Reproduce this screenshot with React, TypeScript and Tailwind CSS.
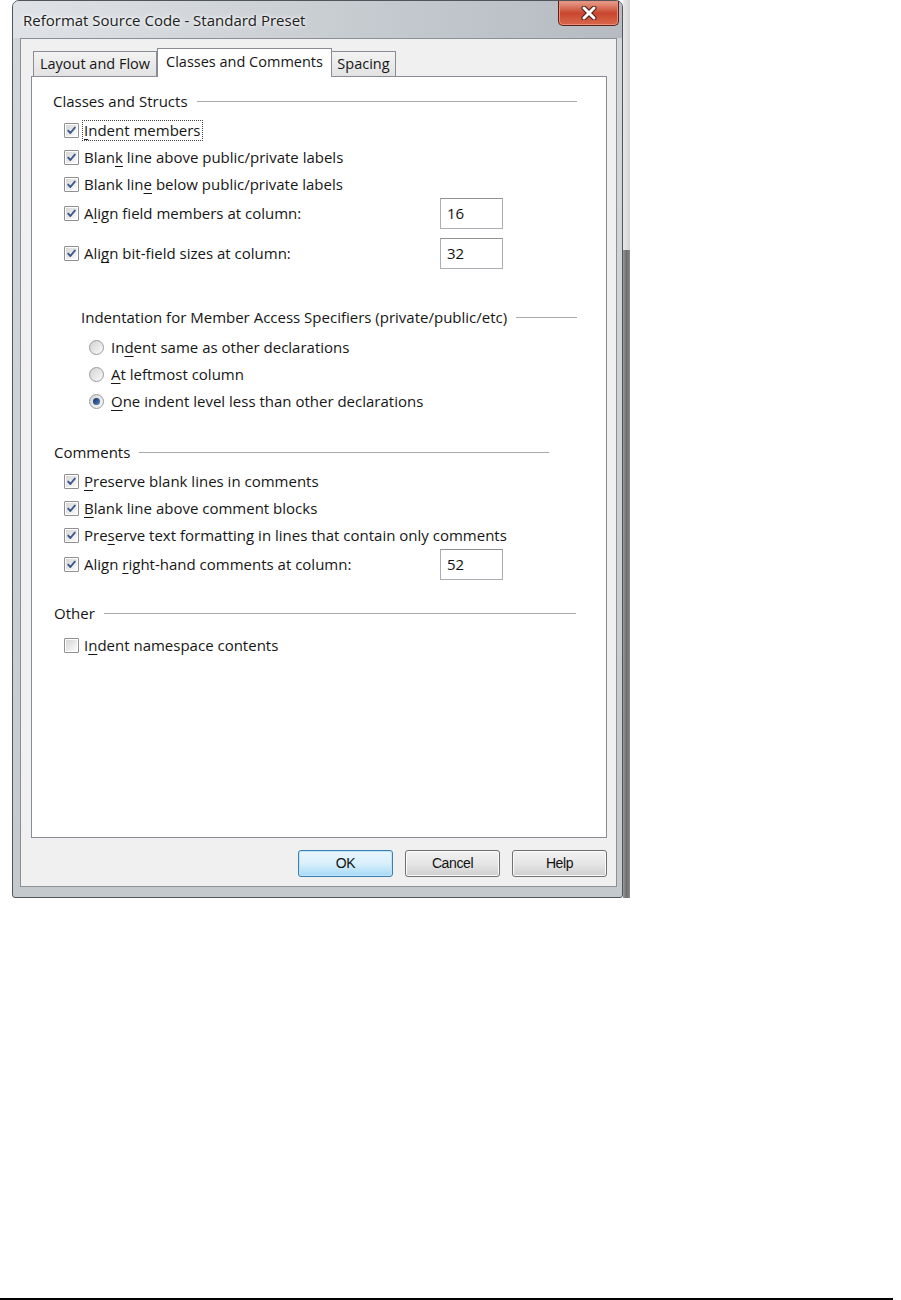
import type { ReactNode } from 'react';

function CheckBox({ checked }: { checked: boolean }) {
  return (
    <span className="w-[15px] h-[15px] shrink-0 border border-[#8f8f8f] bg-white p-px rounded-[1px]">
      <span className="block w-full h-full bg-gradient-to-br from-[#d6d6d6] to-[#fbfbfb] relative">
        {checked && (
          <svg viewBox="0 0 11 11" className="absolute inset-0 w-full h-full">
            <path d="M2.2 5.6 L4.4 8 L8.8 2.6" fill="none" stroke="#3d5a8e" strokeWidth="1.9" strokeLinecap="round" strokeLinejoin="round" />
          </svg>
        )}
      </span>
    </span>
  );
}

function Radio({ selected }: { selected: boolean }) {
  return (
    <span className="w-[15px] h-[15px] shrink-0 rounded-full border border-[#9a9a9a] bg-gradient-to-br from-[#d2d2d2] to-[#fbfbfb] flex items-center justify-center">
      {selected && <span className="w-[7px] h-[7px] rounded-full bg-gradient-to-br from-[#0e2a5a] to-[#5b8ac4]" />}
    </span>
  );
}

function Label({ pre, k, post }: { pre: string; k: string; post: string }) {
  return (
    <span className="whitespace-pre">
      {pre}
      <u className="underline-offset-[3px]">{k}</u>
      {post}
    </span>
  );
}

function Row({ checked, children, focused }: { checked: boolean; children: ReactNode; focused?: boolean }) {
  return (
    <div className="h-[27px] flex items-center pl-[32px]">
      <CheckBox checked={checked} />
      {focused ? (
        <span className="ml-[3px] px-px border border-dotted border-[#444] leading-[19px]">{children}</span>
      ) : (
        <span className="ml-[5px]">{children}</span>
      )}
    </div>
  );
}

function InputRow({ children, value, className = '' }: { children: ReactNode; value: string; className?: string }) {
  return (
    <div className={`h-[31px] flex items-center pl-[32px] ${className}`}>
      <CheckBox checked />
      <span className="ml-[5px] w-[356px]">{children}</span>
      <div className="w-[63px] h-[31px] border border-[#abadb3] border-t-[#8e9096] bg-white flex items-center pl-[6px] text-[#111]">
        {value}
      </div>
    </div>
  );
}

function RadioRow({ selected, children }: { selected: boolean; children: ReactNode }) {
  return (
    <div className="h-[27px] flex items-center pl-[57px]">
      <Radio selected={selected} />
      <span className="ml-[7px]">{children}</span>
    </div>
  );
}

function Header({ title, className }: { title: string; className: string }) {
  return (
    <div className={`h-[20px] flex items-center ${className}`}>
      <span className="whitespace-nowrap">{title}</span>
      <span className="flex-1 ml-[9px] h-px bg-[#a9a9a9]" />
    </div>
  );
}

function Button({ label, primary }: { label: string; primary?: boolean }) {
  return (
    <button
      className={`w-[95px] h-[27px] rounded-[3px] border text-[14px] font-['Liberation_Sans',sans-serif] tracking-[-0.4px] text-[#111] flex items-center justify-center ${
        primary
          ? 'border-[#3c7fb1] bg-gradient-to-b from-[#eaf6fd] via-[#d9f0fc] to-[#a7d9f5] shadow-[inset_0_0_0_1px_#bfe4f8]'
          : 'border-[#707070] bg-gradient-to-b from-[#f2f2f2] via-[#e6e6e6] to-[#cfcfcf] shadow-[inset_0_0_0_1px_#fbfbfb]'
      }`}
    >
      {label}
    </button>
  );
}

export default function App() {
  return (
    <div className="w-[901px] h-[1300px] bg-white flex flex-col font-['Open_Sans','Noto_Sans',sans-serif] text-[15px] text-[#161616]">
      <div className="flex items-start pl-[12px]">
        {/* Window */}
        <div className="w-[611px] h-[898px] border border-[#4f555b] rounded-t-[7px] rounded-b-[3px] bg-gradient-to-b from-[#d3d8dd] via-[#cdd2d7] to-[#c4c9ce] pl-[7px] pr-[5px] flex flex-col">
          {/* Title bar */}
          <div className="h-[37px] flex items-start justify-between -ml-[7px] -mr-[5px] rounded-t-[6px] bg-gradient-to-r from-[#dfe3e7] via-[#c9ced3] to-[#b5bbc1]">
            <span className="mt-[8px] ml-[10px] text-[15px] text-[#202020] [text-shadow:0_0_6px_#ffffff,0_0_3px_#ffffff]">
              Reformat Source Code - Standard Preset
            </span>
            <div className="mr-[3px] w-[61px] h-[25px] rounded-b-[5px] border border-t-0 border-[#5b2118] bg-gradient-to-b from-[#e6a08f] via-[#c9462d] to-[#d8674c] flex items-center justify-center shadow-[inset_0_0_0_1px_#e98f7c]">
              <svg width="16" height="14" viewBox="0 0 16 14">
                <path d="M3 2 L13 12 M13 2 L3 12" stroke="#4a1a14" strokeWidth="5" strokeLinecap="round" />
                <path d="M3 2 L13 12 M13 2 L3 12" stroke="#ffffff" strokeWidth="3" strokeLinecap="round" />
              </svg>
            </div>
          </div>

          {/* Client area */}
          <div className="h-[849px] border border-[#8a9096] bg-[#f0f0f0] pl-[10px] pr-[9px] pt-[9px] pb-[9px] flex flex-col">
            {/* Tabs */}
            <div className="h-[28px] flex items-end text-[14.5px]">
              <div className="ml-[2px] w-[124px] h-[25px] border border-b-0 border-[#898c95] bg-gradient-to-b from-[#f3f3f3] to-[#e2e2e2] flex items-center justify-center">
                Layout and Flow
              </div>
              <div className="w-[175px] h-[29px] -mb-px relative z-10 border border-b-0 border-[#898c95] bg-white flex items-center justify-center pb-[2px]">
                Classes and Comments
              </div>
              <div className="w-[64px] h-[25px] border border-b-0 border-l-0 border-[#898c95] bg-gradient-to-b from-[#f3f3f3] to-[#e2e2e2] flex items-center justify-center">
                Spacing
              </div>
            </div>

            {/* Tab panel */}
            <div className="h-[762px] border border-[#898c95] bg-white flex flex-col">
              <Header title="Classes and Structs" className="mt-[14px] pl-[21px] pr-[29px]" />
              <div className="mt-[6px]">
                <Row checked focused>
                  <Label pre="" k="I" post="ndent members" />
                </Row>
                <Row checked>
                  <Label pre="Blan" k="k" post=" line above public/private labels" />
                </Row>
                <Row checked>
                  <Label pre="Blank lin" k="e" post=" below public/private labels" />
                </Row>
              </div>
              <InputRow value="16">
                <Label pre="A" k="l" post="ign field members at column:" />
              </InputRow>
              <InputRow value="32" className="mt-[9px]">
                <Label pre="Ali" k="g" post="n bit-field sizes at column:" />
              </InputRow>

              <Header title="Indentation for Member Access Specifiers (private/public/etc)" className="mt-[38px] pl-[49px] pr-[29px]" />
              <div className="mt-[7px]">
                <RadioRow selected={false}>
                  <Label pre="In" k="d" post="ent same as other declarations" />
                </RadioRow>
                <RadioRow selected={false}>
                  <Label pre="" k="A" post="t leftmost column" />
                </RadioRow>
                <RadioRow selected>
                  <Label pre="" k="O" post="ne indent level less than other declarations" />
                </RadioRow>
              </div>

              <Header title="Comments" className="mt-[27px] pl-[22px] pr-[57px]" />
              <div className="mt-[6px]">
                <Row checked>
                  <Label pre="" k="P" post="reserve blank lines in comments" />
                </Row>
                <Row checked>
                  <Label pre="" k="B" post="lank line above comment blocks" />
                </Row>
                <Row checked>
                  <Label pre="Pre" k="s" post="erve text formatting in lines that contain only comments" />
                </Row>
              </div>
              <InputRow value="52">
                <Label pre="Align " k="r" post="ight-hand comments at column:" />
              </InputRow>

              <Header title="Other" className="mt-[23px] pl-[22px] pr-[30px]" />
              <div className="mt-[9px]">
                <Row checked={false}>
                  <Label pre="I" k="n" post="dent namespace contents" />
                </Row>
              </div>
            </div>

            {/* Buttons */}
            <div className="mt-[12px] flex justify-end gap-[12px]">
              <Button label="OK" primary />
              <Button label="Cancel" />
              <Button label="Help" />
            </div>
          </div>
        </div>

        {/* Background strip beside the window */}
        <div className="w-[7px] h-[898px] flex flex-col">
          <div className="h-[250px] bg-gradient-to-r from-[#e8e8e8] to-[#d2d2d2]" />
          <div className="flex-1 bg-gradient-to-r from-[#9a9a9a] via-[#6e6e6e] to-[#8a8a8a]" />
        </div>
      </div>

      <div className="flex-1" />
      <div className="w-[893px] h-[2px] bg-black" />
    </div>
  );
}
